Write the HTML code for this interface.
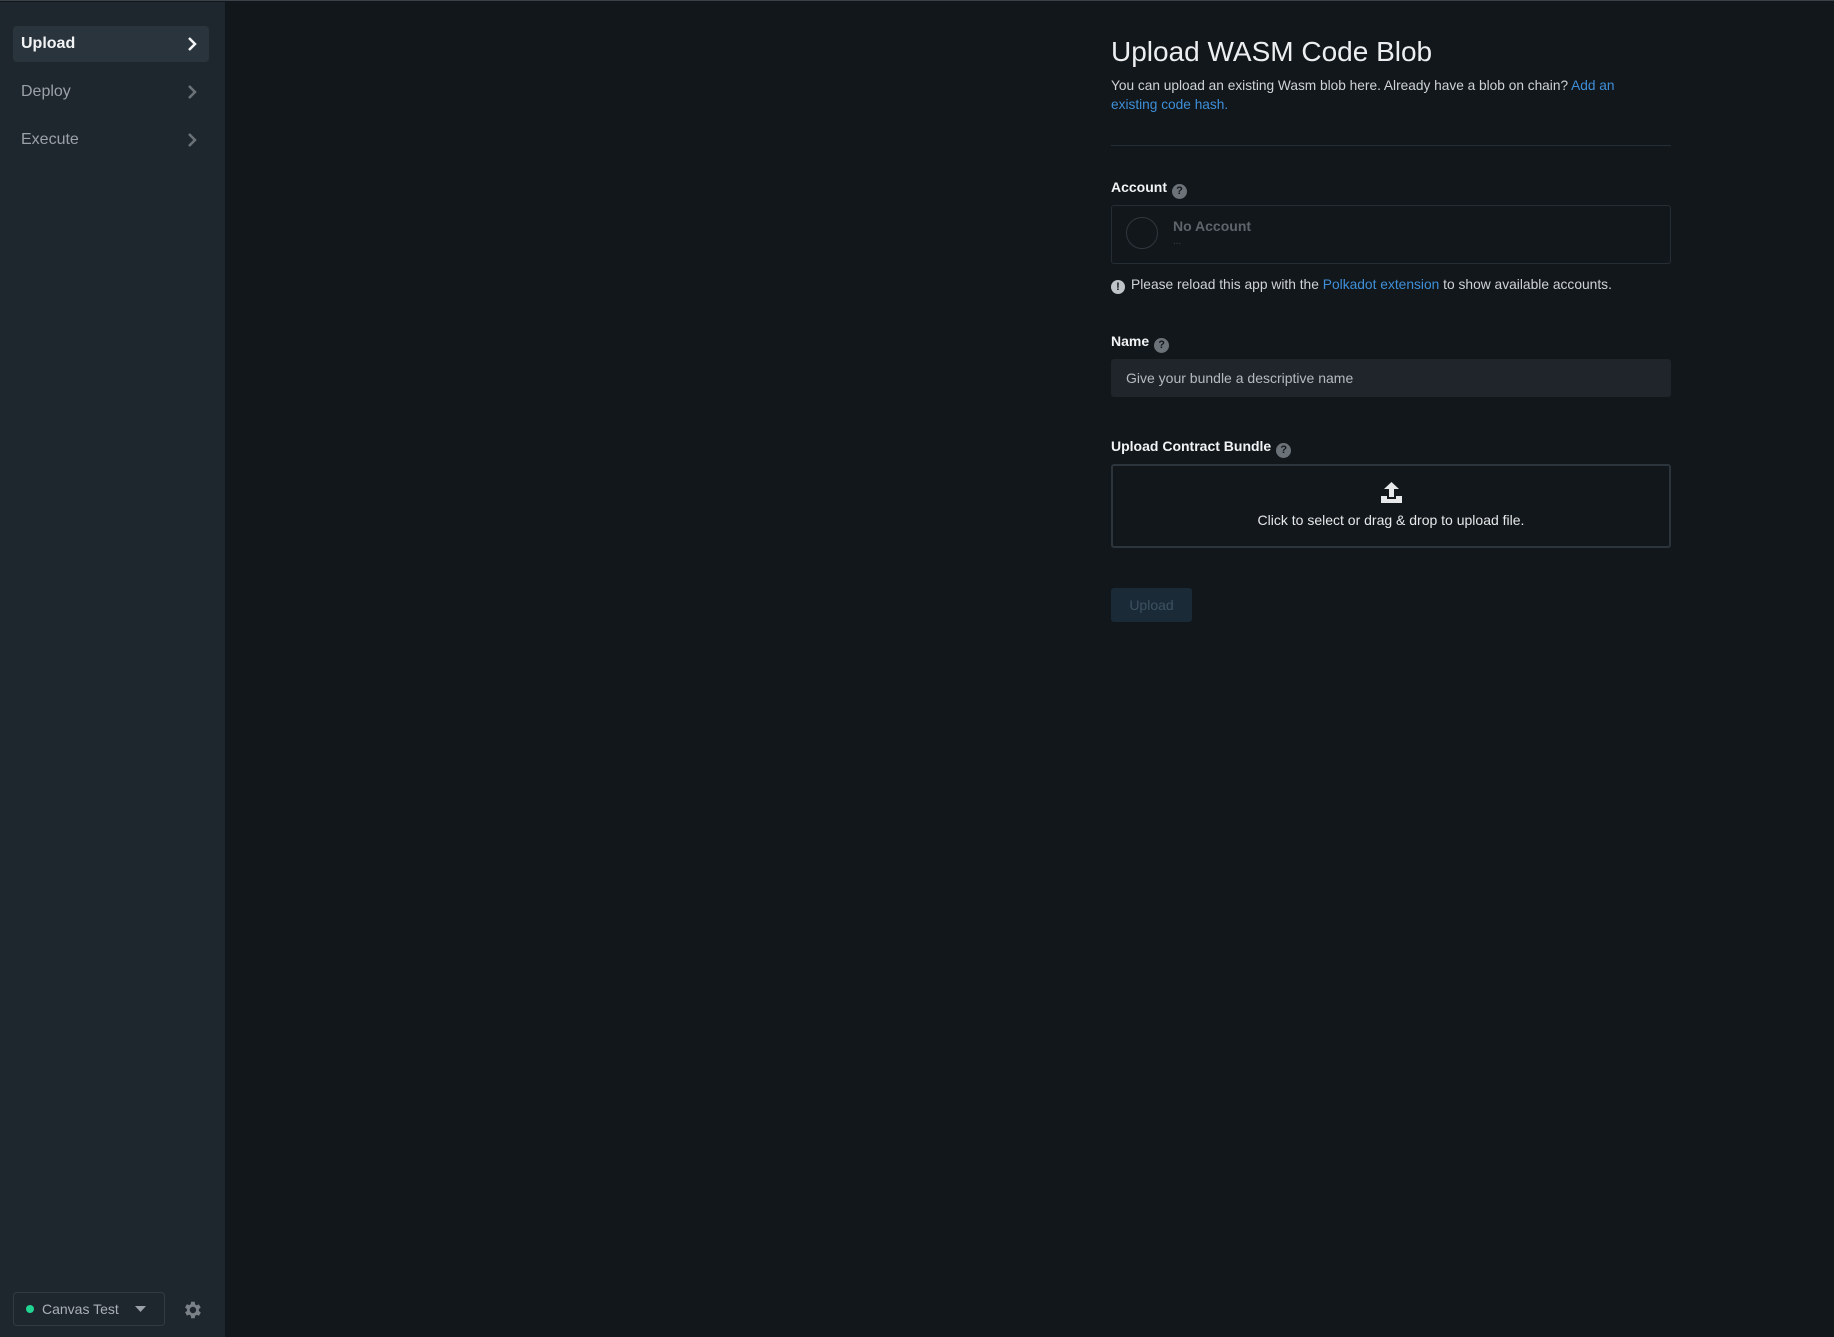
<!DOCTYPE html>
<html><head><style>
*{box-sizing:border-box;margin:0;padding:0}
body{width:1834px;height:1336px;background:#12171b;font-family:"Liberation Sans",sans-serif;position:relative;overflow:hidden;border-top:1px solid #3a4148}
.sb{position:absolute;left:0;top:1px;width:225px;height:1335px;background:#1f272e}
.it{position:absolute;left:13px;width:196px;height:36px;border-radius:4px;color:#9aa1a7;font-size:16px;line-height:36px;padding-left:8px}
.it.a{background:#2a343c;color:#f2f3f4;font-weight:bold}
.it svg{position:absolute;right:12px;top:11px}
.m{position:absolute;left:1111px;width:560px;color:#e6e8ea}
.lbl{font-size:14px;font-weight:bold;color:#f2f3f4}
.q{display:inline-block;width:15px;height:15px;border-radius:50%;background:#6b7278;color:#12171b;font-size:11px;text-align:center;line-height:15px;font-weight:bold;vertical-align:-2px;margin-left:5px}
a{color:#3f8fd8;text-decoration:none}
</style></head><body>
<div class="sb">
<div class="it a" style="top:24px">Upload<svg width="10" height="14" viewBox="0 0 10 14"><path d="M2 1l6 6-6 6" stroke="#f2f3f4" stroke-width="2.5" fill="none"/></svg></div>
<div class="it" style="top:72px">Deploy<svg width="10" height="14" viewBox="0 0 10 14"><path d="M2 1l6 6-6 6" stroke="#6b7278" stroke-width="2.5" fill="none"/></svg></div>
<div class="it" style="top:120px">Execute<svg width="10" height="14" viewBox="0 0 10 14"><path d="M2 1l6 6-6 6" stroke="#6b7278" stroke-width="2.5" fill="none"/></svg></div>
<div style="position:absolute;left:13px;top:1290px;width:152px;height:34px;border:1px solid #323b42;border-radius:4px;color:#aab0b5;font-size:14px;line-height:32px;padding-left:12px">
<span style="display:inline-block;width:8px;height:8px;border-radius:50%;background:#22d491;margin-right:8px;vertical-align:1px"></span>Canvas Test
<svg style="position:absolute;right:18px;top:13px" width="11" height="6"><path d="M0 0h11L5.5 6z" fill="#9aa1a7"/></svg></div>
<svg style="position:absolute;left:181px;top:1297px" width="22" height="22" viewBox="0 0 24 24"><path fill="#7b8287" d="M19.4 13a7.5 7.5 0 000-2l2.1-1.6-2-3.5-2.5 1a7 7 0 00-1.7-1L15 3h-4l-.4 2.7a7 7 0 00-1.7 1l-2.5-1-2 3.5L6.6 11a7.5 7.5 0 000 2l-2.1 1.6 2 3.5 2.5-1a7 7 0 001.7 1L11 21h4l.4-2.7a7 7 0 001.7-1l2.5 1 2-3.5zM13 15.5a3.5 3.5 0 110-7 3.5 3.5 0 010 7z"/></svg>
</div>
<div class="m" style="top:35px;font-size:28px;font-weight:300;color:#eceef0">Upload WASM Code Blob</div>
<div class="m" style="top:75px;width:530px;font-size:13.7px;line-height:19px;color:#cfd3d6">You can upload an existing Wasm blob here. Already have a blob on chain? <a>Add an existing code hash.</a></div>
<div class="m" style="top:144px;height:1px;background:#262e35"></div>
<div class="m lbl" style="top:178px">Account<span class="q">?</span></div>
<div class="m" style="top:204px;height:59px;border:1px solid #262e35;border-radius:3px">
<div style="position:absolute;left:14px;top:11px;width:32px;height:32px;border-radius:50%;border:1px solid #2f373e"></div>
<div style="position:absolute;left:61px;top:12px;font-size:14px;font-weight:bold;color:#5d646a">No Account</div>
<div style="position:absolute;left:61px;top:30px;font-size:10px;color:#3d444a">...</div></div>
<div class="m" style="top:276px;font-size:13.8px;color:#cfd3d6"><span style="display:inline-block;width:14px;height:14px;border-radius:50%;background:#bfc4c8;color:#12171b;font-size:11px;font-weight:bold;text-align:center;line-height:14px;margin-right:6px;vertical-align:-1px">!</span>Please reload this app with the <a>Polkadot extension</a> to show available accounts.</div>
<div class="m lbl" style="top:332px">Name<span class="q">?</span></div>
<div class="m" style="top:358px;height:38px;background:#1f252b;border-radius:3px;font-size:14px;color:#b5babe;line-height:38px;padding-left:15px">Give your bundle a descriptive name</div>
<div class="m lbl" style="top:437px">Upload Contract Bundle<span class="q">?</span></div>
<div class="m" style="top:463px;height:84px;border:2px solid #2c353c;border-radius:3px;text-align:center">
<svg style="position:absolute;left:268px;top:16px" width="21" height="22" viewBox="0 0 21 22"><path d="M10.5 0L3 7h5v8h5V7h5z" fill="#e6e8ea"/><path d="M0 14h6v3h9v-3h6v7H0z" fill="#e6e8ea"/></svg>
<div style="position:absolute;left:0;right:0;top:46px;font-size:14px;color:#e6e8ea">Click to select or drag &amp; drop to upload file.</div></div>
<div style="position:absolute;left:1111px;top:587px;width:81px;height:34px;background:#1a2a36;border-radius:3px;color:#3d5161;font-size:14px;text-align:center;line-height:34px">Upload</div>
</body></html>
